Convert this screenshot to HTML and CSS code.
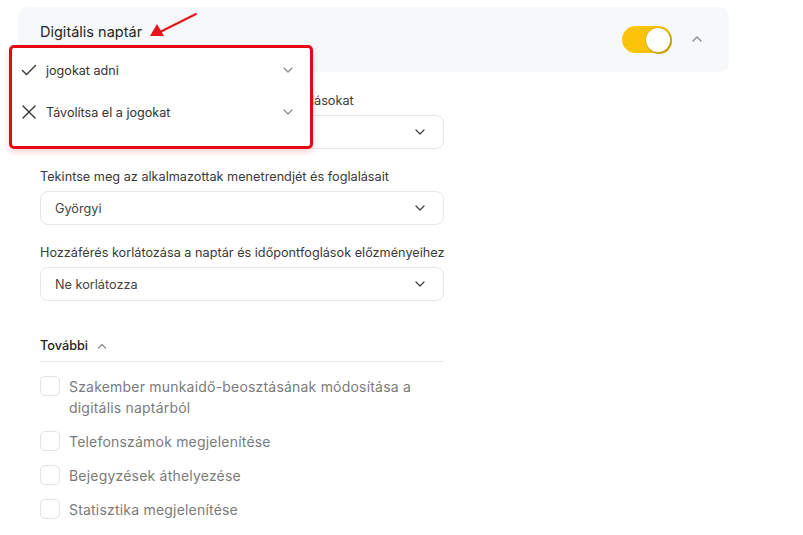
FILE: index.html
```html
<!DOCTYPE html>
<html lang="hu">
<head>
<meta charset="utf-8">
<link rel="stylesheet" href="styles.css">
</head>
<body>
<div class="page">
  <div class="card-head">
    <span class="title">Digitális naptár</span>
    <div class="head-actions">
      <span class="toggle"><span class="knob"></span></span>
      <svg class="chev-up" width="12" height="8" viewBox="0 0 12 8"><path d="M2 6 L6 2 L10 6" fill="none" stroke="#8a8a8a" stroke-width="1.4" stroke-linecap="round" stroke-linejoin="round"/></svg>
    </div>
  </div>

  <div class="content">
    <div class="field">
      <div class="label">Rendezze a munkatársak beosztását és foglalásokat</div>
      <div class="select"><span></span><svg class="chev" width="10" height="6" viewBox="0 0 10 6"><path d="M1 1 L5 5 L9 1" fill="none" stroke="#444" stroke-width="1.3" stroke-linecap="round" stroke-linejoin="round"/></svg></div>
    </div>
    <div class="field">
      <div class="label">Tekintse meg az alkalmazottak menetrendjét és foglalásait</div>
      <div class="select"><span>Györgyi</span><svg class="chev" width="10" height="6" viewBox="0 0 10 6"><path d="M1 1 L5 5 L9 1" fill="none" stroke="#444" stroke-width="1.3" stroke-linecap="round" stroke-linejoin="round"/></svg></div>
    </div>
    <div class="field">
      <div class="label">Hozzáférés korlátozása a naptár és időpontfoglások előzményeihez</div>
      <div class="select"><span>Ne korlátozza</span><svg class="chev" width="10" height="6" viewBox="0 0 10 6"><path d="M1 1 L5 5 L9 1" fill="none" stroke="#444" stroke-width="1.3" stroke-linecap="round" stroke-linejoin="round"/></svg></div>
    </div>

    <div class="more">
      <div class="more-head">
        <span>További</span>
        <svg width="10" height="6" viewBox="0 0 10 6"><path d="M1.5 5 L5 1.5 L8.5 5" fill="none" stroke="#8a8a8a" stroke-width="1.2" stroke-linecap="round" stroke-linejoin="round"/></svg>
      </div>
      <div class="checks">
        <label class="check"><span class="box"></span><span class="ctext">Szakember munkaidő-beosztásának módosítása a digitális naptárból</span></label>
        <label class="check"><span class="box"></span><span class="ctext">Telefonszámok megjelenítése</span></label>
        <label class="check"><span class="box"></span><span class="ctext">Bejegyzések áthelyezése</span></label>
        <label class="check"><span class="box"></span><span class="ctext">Statisztika megjelenítése</span></label>
      </div>
    </div>
  </div>

  <svg class="arrow" width="60" height="34" viewBox="0 0 60 34">
    <line x1="52" y1="5" x2="16" y2="23" stroke="#e8141c" stroke-width="2" stroke-linecap="round"/>
    <polygon points="6,27 13,15 20,27" fill="#e8141c"/>
  </svg>

  <div class="menu">
    <div class="menu-item">
      <svg class="mi-icon" width="16" height="16" viewBox="0 0 16 16"><path d="M1.5 8.5 L5.5 12.5 L14.5 3.5" fill="none" stroke="#333" stroke-width="1.4" stroke-linecap="round" stroke-linejoin="round"/></svg>
      <span class="mi-text">jogokat adni</span>
      <svg class="mi-chev" width="10" height="6" viewBox="0 0 10 6"><path d="M1 1 L5 5 L9 1" fill="none" stroke="#888" stroke-width="1.2" stroke-linecap="round" stroke-linejoin="round"/></svg>
    </div>
    <div class="menu-item">
      <svg class="mi-icon" width="16" height="16" viewBox="0 0 16 16"><path d="M2 2 L14 14 M14 2 L2 14" fill="none" stroke="#333" stroke-width="1.4" stroke-linecap="round"/></svg>
      <span class="mi-text">Távolítsa el a jogokat</span>
      <svg class="mi-chev" width="10" height="6" viewBox="0 0 10 6"><path d="M1 1 L5 5 L9 1" fill="none" stroke="#888" stroke-width="1.2" stroke-linecap="round" stroke-linejoin="round"/></svg>
    </div>
  </div>
</div>
</body>
</html>
```

FILE: styles.css
```css
* { box-sizing: border-box; }
html, body { margin: 0; padding: 0; background: #fff; }
body {
  font-family: Inter, "Noto Sans", sans-serif;
  color: #333;
  width: 803px;
  height: 535px;
  overflow: hidden;
}
.page {
  position: relative;
  padding: 7px 0 0 18px;
}
.card-head {
  width: 711px;
  height: 65px;
  background: #f7f8fa;
  border-radius: 10px;
  display: flex;
  align-items: flex-start;
  justify-content: space-between;
  padding: 14px 26px 0 22px;
}
.title {
  font-size: 14.5px;
  font-weight: 400;
  color: #262626;
  line-height: 20px;
  margin-top: 1px;
}
.head-actions {
  display: flex;
  align-items: center;
  gap: 19px;
  margin-top: 5px;
}
.toggle {
  width: 50px;
  height: 27px;
  border-radius: 14px;
  background: #fcc30b;
  display: flex;
  align-items: center;
  justify-content: flex-end;
  padding-right: 2px;
}
.knob {
  width: 24px;
  height: 24px;
  border-radius: 50%;
  background: #fff;
  box-shadow: 1px 1px 0 1px #c9a310, 0 0 0 1px #e0b30d;
}
.chev-up { display: block; margin-top: -1px; }

.content {
  width: 404px;
  margin-left: 22px;
  padding-top: 21px;
  display: flex;
  flex-direction: column;
  gap: 20px;
}
.field {
  display: flex;
  flex-direction: column;
  gap: 6px;
}
.label {
  font-size: 12.7px;
  line-height: 16px;
  color: #3a3a3a;
  white-space: nowrap;
}
.select {
  height: 34px;
  border: 1px solid #e6e6e6;
  border-radius: 8px;
  display: flex;
  align-items: center;
  justify-content: space-between;
  padding: 0 18px 0 14px;
  font-size: 12.7px;
  color: #444;
}
.chev { display: block; }

.more { margin-top: 16px; }
.more-head {
  display: flex;
  align-items: center;
  gap: 9px;
  font-size: 12.7px;
  font-weight: 500;
  color: #222;
  line-height: 16px;
  padding-top: 1px;
  padding-bottom: 7px;
  border-bottom: 1px solid #e9e9e9;
}
.checks {
  display: flex;
  flex-direction: column;
  gap: 13.5px;
  padding-top: 14px;
}
.check {
  display: flex;
  align-items: flex-start;
  gap: 9px;
}
.box {
  flex: none;
  width: 20px;
  height: 20px;
  border: 1.5px solid #e2e2e2;
  border-radius: 5px;
  background: #fff;
}
.ctext {
  font-size: 14px;
  line-height: 21px;
  color: #7b7b7b;
  letter-spacing: 0.2px;
  margin-top: -0.5px;
}

.arrow {
  position: absolute;
  left: 144px;
  top: 9px;
}
.menu {
  position: absolute;
  left: 9px;
  top: 45px;
  width: 304px;
  height: 104px;
  background: #fff;
  border: 3px solid #e50914;
  border-radius: 5px;
  box-shadow: 0 3px 6px rgba(229, 9, 20, 0.18);
  padding: 1px 0 0 0;
}
.menu-item {
  height: 42px;
  display: flex;
  align-items: center;
  padding: 0 17px 0 9px;
}
.mi-icon { flex: none; display: block; }
.mi-text {
  flex: 1;
  margin-left: 9px;
  font-size: 12.6px;
  color: #333;
}
.mi-chev { display: block; }
```
